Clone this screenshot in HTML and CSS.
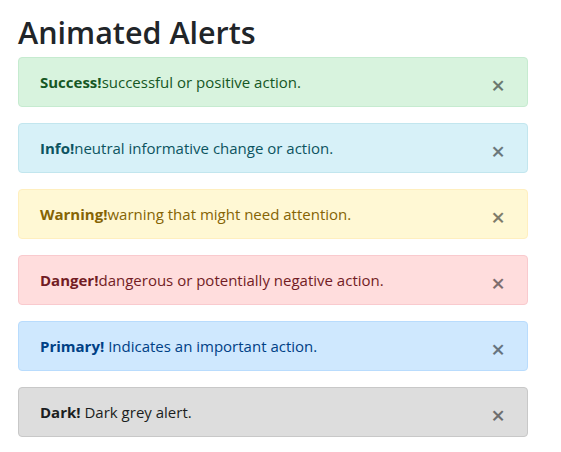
FILE: index.html
```html
<!DOCTYPE html>
<html>
<head>
<meta charset="utf-8">
<link rel="stylesheet" href="styles.css">
</head>
<body>
<div class="container">
  <h2 class="title">Animated Alerts</h2>
  <div class="alert alert-success"><strong>Success!</strong>successful or positive action.<button class="close">&times;</button></div>
  <div class="alert alert-info"><strong>Info!</strong>neutral informative change or action.<button class="close">&times;</button></div>
  <div class="alert alert-warning"><strong>Warning!</strong>warning that might need attention.<button class="close">&times;</button></div>
  <div class="alert alert-danger"><strong>Danger!</strong>dangerous or potentially negative action.<button class="close">&times;</button></div>
  <div class="alert alert-primary"><strong>Primary!</strong> Indicates an important action.<button class="close">&times;</button></div>
  <div class="alert alert-dark"><strong>Dark!</strong> Dark grey alert.<button class="close">&times;</button></div>
</div>
</body>
</html>
```
FILE: styles.css
```css
* { box-sizing: border-box; }
body {
  margin: 0;
  font-family: "Open Sans", "Noto Sans", sans-serif;
  font-size: 15px;
  line-height: 24px;
  color: #212529;
  background: #fff;
}
.container {
  width: 510px;
  margin-left: 18px;
  padding-top: 13px;
}
.title {
  margin: 0 0 6px 0;
  font-size: 30.5px;
  font-weight: 600;
  line-height: 38px;
  letter-spacing: 0;
}
.alert {
  position: relative;
  padding: 12px 64px 12px 21px;
  margin-bottom: 16px;
  border: 1px solid transparent;
  border-radius: 4px;
}
.alert strong { font-weight: 700; }
.close {
  position: absolute;
  top: 0;
  right: 0;
  padding: 12px 22px;
  background: transparent;
  border: 0;
  font-family: inherit;
  font-size: 24px;
  font-weight: 600;
  line-height: 1;
  color: #000;
  opacity: .5;
  cursor: pointer;
  margin-top: 3px;
}
.alert-success { color: #155724; background: #d8f3de; border-color: #c6ebd0; }
.alert-info { color: #0c5460; background: #d7f1f8; border-color: #c2e6ee; }
.alert-warning { color: #856404; background: #fff8d4; border-color: #ffefbf; }
.alert-danger { color: #721c24; background: #ffdddd; border-color: #f9cace; }
.alert-primary { color: #004085; background: #cfe8fe; border-color: #b9dcfd; }
.alert-dark { color: #1b1e21; background: #dddddd; border-color: #c8c8c8; }
```
